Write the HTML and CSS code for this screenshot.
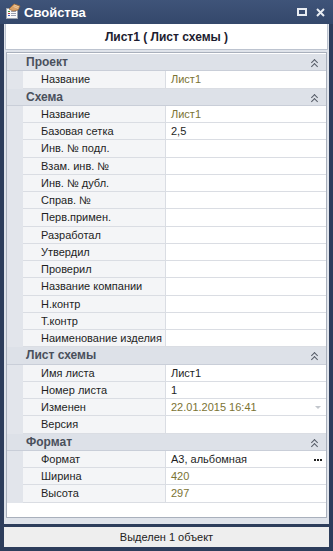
FILE: index.html
```html
<!DOCTYPE html>
<html lang="ru">
<head>
  <meta charset="UTF-8">
  <title>Свойства</title>
  <link rel="stylesheet" href="styles.css">
</head>
<body>
  <div class="window">
    <div class="titlebar">
      <svg class="app-icon" width="16" height="16" viewBox="0 0 16 16">
        <rect x="1.5" y="5.5" width="11" height="10" fill="#fafafa" stroke="#9aa3ae"/>
        <rect x="3" y="8" width="2" height="1" fill="#3a9a3a"/>
        <rect x="6" y="8" width="5" height="1" fill="#9aa0b0"/>
        <rect x="3" y="10" width="2" height="1" fill="#c04040"/>
        <rect x="6" y="10" width="5" height="1" fill="#9aa0b0"/>
        <rect x="3" y="12" width="2" height="1" fill="#4060c0"/>
        <rect x="6" y="12" width="5" height="1" fill="#9aa0b0"/>
        <path d="M4 6 L9 1 L15 3 L13 7 L8 8 Z" fill="#d9a066" stroke="#9a6a3a" stroke-width="0.8"/>
        <path d="M9 2 L14 4 M8.5 3.5 L13.5 5.5" stroke="#f3d2a8" stroke-width="0.8"/>
      </svg>
      <span class="title">Свойства</span>
      <span class="win-btns">
        <svg width="10" height="8" viewBox="0 0 10 8"><rect x="1" y="1" width="8" height="6" fill="none" stroke="#e8ecf2" stroke-width="2"/></svg>
        <svg width="9" height="9" viewBox="0 0 9 9"><path d="M1 1 L8 8 M8 1 L1 8" stroke="#e8ecf2" stroke-width="2"/></svg>
      </span>
    </div>

    <div class="panel">
      <div class="caption">Лист1 ( Лист схемы )</div>

      <div class="grid">
        <div class="section">
          <div class="sec-head">Проект<span class="chev"></span></div>
          <div class="row"><span class="name">Название</span><span class="value ro">Лист1</span></div>
        </div>

        <div class="section">
          <div class="sec-head">Схема<span class="chev"></span></div>
          <div class="row"><span class="name">Название</span><span class="value ro">Лист1</span></div>
          <div class="row"><span class="name">Базовая сетка</span><span class="value">2,5</span></div>
          <div class="row"><span class="name">Инв. № подл.</span><span class="value"></span></div>
          <div class="row"><span class="name">Взам. инв. №</span><span class="value"></span></div>
          <div class="row"><span class="name">Инв. № дубл.</span><span class="value"></span></div>
          <div class="row"><span class="name">Справ. №</span><span class="value"></span></div>
          <div class="row"><span class="name">Перв.примен.</span><span class="value"></span></div>
          <div class="row"><span class="name">Разработал</span><span class="value"></span></div>
          <div class="row"><span class="name">Утвердил</span><span class="value"></span></div>
          <div class="row"><span class="name">Проверил</span><span class="value"></span></div>
          <div class="row"><span class="name">Название компании</span><span class="value"></span></div>
          <div class="row"><span class="name">Н.контр</span><span class="value"></span></div>
          <div class="row"><span class="name">Т.контр</span><span class="value"></span></div>
          <div class="row"><span class="name">Наименование изделия</span><span class="value"></span></div>
        </div>

        <div class="section">
          <div class="sec-head">Лист схемы<span class="chev"></span></div>
          <div class="row"><span class="name">Имя листа</span><span class="value">Лист1</span></div>
          <div class="row"><span class="name">Номер листа</span><span class="value">1</span></div>
          <div class="row"><span class="name">Изменен</span><span class="value ro">22.01.2015 16:41<span class="drop"></span></span></div>
          <div class="row"><span class="name">Версия</span><span class="value"></span></div>
        </div>

        <div class="section">
          <div class="sec-head">Формат<span class="chev"></span></div>
          <div class="row"><span class="name">Формат</span><span class="value">А3, альбомная<span class="dots"><i></i><i></i><i></i></span></span></div>
          <div class="row"><span class="name">Ширина</span><span class="value ro">420</span></div>
          <div class="row"><span class="name">Высота</span><span class="value ro">297</span></div>
        </div>
      </div>
    </div>

    <div class="status">Выделен 1 объект</div>
  </div>
</body>
</html>
```

FILE: styles.css
```css
html, body {
  margin: 0;
  padding: 0;
}

body {
  font-family: "Liberation Sans", Arial, sans-serif;
  font-size: 11px;
  color: #1e1e1e;
  background-color: #2b3a57;
}

.window {
  width: 333px;
  height: 551px;
  box-sizing: border-box;
  padding: 0 4px 4px 4px;
  background-color: #2d3d5b;
  display: flex;
  flex-direction: column;
}

/* Title bar */
.titlebar {
  height: 24px;
  display: flex;
  align-items: center;
  color: white;
  background: linear-gradient(#3f5479, #34486b);
  margin: 0 -4px;
  padding: 0 6px 0 5px;
}

.app-icon {
  margin-right: 3px;
  margin-top: -3px;
}

.title {
  font-weight: bold;
  font-size: 13px;
  flex: 1;
}

.win-btns {
  display: flex;
  align-items: center;
  gap: 9px;
  margin-right: 2px;
}

/* Panel */
.panel {
  flex: 1;
  background-color: #dfe3ea;
  display: flex;
  flex-direction: column;
  padding: 0 1px;
}

.caption {
  height: 25px;
  background-color: white;
  border: 1px solid #bcc3cf;
  border-top: none;
  display: flex;
  align-items: center;
  justify-content: center;
  font-weight: bold;
  font-size: 12px;
  color: #1c1c30;
}

.grid {
  flex: 1;
  margin: 2px 1px 6px 1px;
  background-color: white;
  border: 1px solid #a9b0bc;
  padding-top: 1px;
}

.section {
  background-color: #e2e5eb;
}

.sec-head {
  height: 17.25px;
  box-sizing: border-box;
  display: flex;
  align-items: center;
  padding-left: 19px;
  font-weight: bold;
  font-size: 12px;
  color: #4a505c;
  background-color: #dde1e8;
  border-bottom: 1px solid #c9ced8;
  position: relative;
}

.chev {
  position: absolute;
  right: 7px;
  top: 5px;
  width: 8px;
  height: 8px;
}

.chev::before,
.chev::after {
  content: "";
  position: absolute;
  left: 1px;
  width: 4px;
  height: 4px;
  border-left: 1.5px solid #555b66;
  border-top: 1.5px solid #555b66;
  transform: rotate(45deg);
}

.chev::before { top: 1px; }
.chev::after { top: 5px; }

.row {
  height: 17.25px;
  box-sizing: border-box;
  display: flex;
  margin-left: 16px;
  border-bottom: 1px solid #dadde3;
  background-color: white;
}

.name {
  width: 143px;
  padding-left: 18px;
  box-sizing: border-box;
  background-color: #f4f5f7;
  border-right: 1px solid #dadde3;
  display: flex;
  align-items: center;
  white-space: nowrap;
  overflow: hidden;
}

.value {
  flex: 1;
  padding-left: 5px;
  display: flex;
  align-items: center;
  position: relative;
}

.value.ro {
  color: #7b7333;
}

.drop {
  position: absolute;
  right: 5px;
  top: 7px;
  border-left: 3.5px solid transparent;
  border-right: 3.5px solid transparent;
  border-top: 3.5px solid #c2c6cc;
}

.dots {
  position: absolute;
  right: 4px;
  top: 8px;
  display: flex;
  gap: 1px;
}

.dots i {
  width: 2px;
  height: 2px;
  background-color: #222;
}

.status {
  height: 20px;
  margin-top: 3px;
  background-color: #eeeeee;
  display: flex;
  align-items: center;
  justify-content: center;
  color: #222;
}
```
